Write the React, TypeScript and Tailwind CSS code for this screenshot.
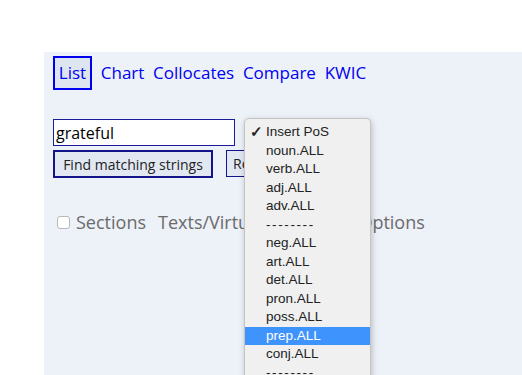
const tabs = ['List', 'Chart', 'Collocates', 'Compare', 'KWIC']

const posItems = [
  'Insert PoS',
  'noun.ALL',
  'verb.ALL',
  'adj.ALL',
  'adv.ALL',
  '--------',
  'neg.ALL',
  'art.ALL',
  'det.ALL',
  'pron.ALL',
  'poss.ALL',
  'prep.ALL',
  'conj.ALL',
  '--------',
]

const App = () => {
  return (
    <div className="flex h-[375px] w-[522px] overflow-hidden bg-white pl-[44px] pt-[52px] font-['Open_Sans',sans-serif]">
      <div className="relative flex flex-1 flex-col bg-[#edf1f8] pl-[9px] pt-[4px]">
        <nav className="flex items-center gap-[8.75px] text-[17px] text-[#0000f0]">
          {tabs.map((tab, i) => (
            <span
              key={tab}
              className={
                i === 0
                  ? 'flex h-[34px] w-[39px] items-center justify-center border-2 border-[#0000f0] bg-[#dde5f1]'
                  : 'leading-[34px]'
              }
            >
              {tab}
            </span>
          ))}
        </nav>

        <input
          readOnly
          value="grateful"
          className="mt-[29px] h-[27px] w-[182px] border border-[#1a1a9a] bg-white px-[2px] text-[16px] text-black outline-none"
        />

        <div className="mt-[4px] flex gap-[13px]">
          <button className="h-[28px] w-[160px] border-2 border-[#14148a] bg-[#e2e8f2] text-[14px] text-[#222]">
            Find matching strings
          </button>
          <button className="h-[27px] w-[60px] border border-[#14148a] bg-[#e2e8f2] pl-[6px] text-left text-[14px] text-[#222]">
            Reset
          </button>
        </div>

        <div className="mt-[31px] flex items-center text-[18px] text-[#6b6b6b]">
          <span className="ml-[4px] h-[13px] w-[13px] rounded-[3px] border border-[#b8b8b8] bg-white" />
          <span className="ml-[6px]">Sections</span>
          <span className="ml-[12px]">Texts/Virtual corpora</span>
          <span className="ml-[24px]">Options</span>
        </div>

        <div className="absolute left-[200px] top-[66px] h-[320px] w-[127px] overflow-hidden rounded-t-[5px] border border-b-0 border-[#c4c4c4] bg-[#f0f0f0] pt-[4px] font-['Liberation_Sans',sans-serif] text-[13.5px] text-[#222] shadow-[1px_2px_6px_rgba(0,0,0,0.22)]">
          {posItems.map((item, i) => (
            <div
              key={i}
              className={
                item === 'prep.ALL'
                  ? 'relative h-[18.5px] bg-[#3f93fc] pl-[21px] leading-[18.5px] text-white'
                  : item.startsWith('-')
                    ? 'relative h-[18.5px] pl-[21px] leading-[18.5px] tracking-[1.6px]'
                    : 'relative h-[18.5px] pl-[21px] leading-[18.5px]'
              }
            >
              {i === 0 && (
                <span className="absolute left-[5px] top-0 text-[15px] font-bold">✓</span>
              )}
              {item}
            </div>
          ))}
        </div>
      </div>
    </div>
  )
}

export default App
